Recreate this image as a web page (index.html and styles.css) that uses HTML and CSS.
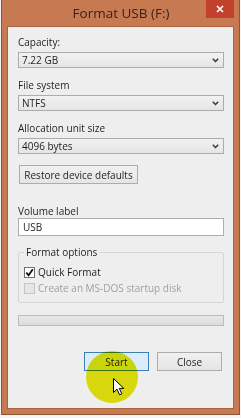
FILE: index.html
```html
<!DOCTYPE html>
<html lang="en">
<head>
  <meta charset="UTF-8" />
  <title>Format USB (F:)</title>
  <link rel="stylesheet" href="styles.css">
</head>
<body>
  <div class="window">
    <div class="titlebar">
      <span></span>
      <span class="title">Format USB (F:)</span>
      <button type="button" class="close-btn" title="Close">
        <svg width="8" height="8" viewBox="0 0 8 8"><path d="M1 1L7 7M7 1L1 7" stroke="#fff" stroke-width="1.6" /></svg>
      </button>
    </div>

    <div class="dialog">
      <div class="field">
        <label>Capacity:</label>
        <div class="combo"><span>7.22 GB</span><svg width="7" height="5" viewBox="0 0 7 5"><path d="M0.8 0.8L3.5 3.6L6.2 0.8" fill="none" stroke="#333" stroke-width="1.4" /></svg></div>
      </div>
      <div class="field">
        <label>File system</label>
        <div class="combo"><span>NTFS</span><svg width="7" height="5" viewBox="0 0 7 5"><path d="M0.8 0.8L3.5 3.6L6.2 0.8" fill="none" stroke="#333" stroke-width="1.4" /></svg></div>
      </div>
      <div class="field">
        <label>Allocation unit size</label>
        <div class="combo"><span>4096 bytes</span><svg width="7" height="5" viewBox="0 0 7 5"><path d="M0.8 0.8L3.5 3.6L6.2 0.8" fill="none" stroke="#333" stroke-width="1.4" /></svg></div>
      </div>

      <button type="button" class="btn restore">Restore device defaults</button>

      <div class="field volume">
        <label>Volume label</label>
        <div class="textbox">USB</div>
      </div>

      <fieldset class="options">
        <legend>Format options</legend>
        <div class="check">
          <span class="box"><svg width="9" height="9" viewBox="0 0 9 9"><path d="M1.3 4.6L3.6 7.2L7.8 1.2" fill="none" stroke="#111" stroke-width="1.8" /></svg></span>
          Quick Format
        </div>
        <div class="check disabled">
          <span class="box"></span>
          Create an MS-DOS startup disk
        </div>
      </fieldset>

      <div class="progress"></div>

      <div class="actions">
        <button type="button" class="btn start">Start</button>
        <button type="button" class="btn">Close</button>
      </div>

      <!-- click highlight + mouse pointer from the recording -->
      <div class="highlight"></div>
      <svg class="pointer" width="12" height="18" viewBox="0 0 12 18"><path d="M0.5 0.5L0.5 14.5L4 11.2L6.6 16.8L8.8 15.8L6.3 10.4L10.8 10.4Z" fill="#fff" stroke="#000" stroke-width="1" /></svg>
    </div>
  </div>
</body>
</html>
```

FILE: styles.css
```css
body {
  margin: 0;
  background: #f4f4f4;
  font-family: "Open Sans", "Liberation Sans", sans-serif;
}
.window {
  width: 239px;
  height: 415px;
  margin-left: 1px;
  box-sizing: border-box;
  background: #c77a52;
  border: 1px solid #8d5537;
  border-top: 0;
  padding: 0 6px 6px;
  display: flex;
  flex-direction: column;
}
.titlebar {
  height: 27px;
  display: grid;
  grid-template-columns: 1fr auto 1fr;
  align-items: start;
  margin-right: -1px;
}
.title {
  font-size: 13.5px;
  line-height: 27px;
  color: #38221a;
}
.close-btn {
  justify-self: end;
  width: 28px;
  height: 18px;
  background: #c2412c;
  border: 0;
  padding: 0;
  display: flex;
  align-items: center;
  justify-content: center;
}
.dialog {
  flex: 1;
  position: relative;
  background: #eeeeee;
  box-shadow: 0 0 0 1px rgba(110, 55, 25, 0.35);
  padding: 8px 9px 0 10px;
  font-size: 10px;
  color: #1e1e1e;
}
.field {
  margin-bottom: 10px;
}
.field label {
  display: block;
  line-height: 14px;
  margin-bottom: 3px;
}
.combo {
  height: 16px;
  box-sizing: border-box;
  border: 1px solid #acacac;
  background: linear-gradient(#f2f2f2, #e5e5e5);
  display: flex;
  align-items: center;
  justify-content: space-between;
  padding: 0 4px 0 3px;
  line-height: 14px;
}
.btn {
  font: inherit;
  color: #1e1e1e;
  height: 19px;
  box-sizing: border-box;
  border: 1px solid #acacac;
  background: linear-gradient(#f0f0f0, #e5e5e5);
  padding: 0;
}
.restore {
  display: block;
  width: 119px;
  margin: 11px 0 0 1px;
}
.volume {
  margin-top: 20px;
}
.volume label {
  margin-bottom: 0;
}
.textbox {
  height: 18px;
  box-sizing: border-box;
  border: 1px solid #abadb3;
  background: #fff;
  padding-left: 4px;
  line-height: 16px;
}
.options {
  margin: 0;
  padding: 7px 5px;
  border: 1px solid #d5d5d5;
  border-radius: 2px;
}
.options legend {
  padding: 0 2px;
  line-height: 12px;
}
.check {
  display: flex;
  align-items: center;
  gap: 3px;
  line-height: 14px;
}
.check + .check {
  margin-top: 2px;
}
.box {
  width: 11px;
  height: 11px;
  box-sizing: border-box;
  border: 1px solid #707070;
  background: #fff;
  display: flex;
  align-items: center;
  justify-content: center;
}
.disabled {
  color: #a0a0a0;
}
.disabled .box {
  border-color: #c4c4c4;
  background: #e6e6e6;
}
.progress {
  height: 11px;
  margin-top: 12px;
  box-sizing: border-box;
  border: 1px solid #bcbcbc;
  background: linear-gradient(#e8e8e8, #dcdcdc);
}
.actions {
  display: flex;
  justify-content: flex-end;
  gap: 8px;
  margin-top: 26px;
  padding-right: 2px;
}
.actions .btn {
  width: 65px;
}
.btn.start {
  border-color: #3c7fb1;
  background: #dcecfc;
}
.highlight {
  position: absolute;
  left: 78px;
  top: 324px;
  width: 52px;
  height: 52px;
  border-radius: 50%;
  background: #e8e60c;
  mix-blend-mode: multiply;
}
.pointer {
  position: absolute;
  left: 105px;
  top: 351px;
}
```
